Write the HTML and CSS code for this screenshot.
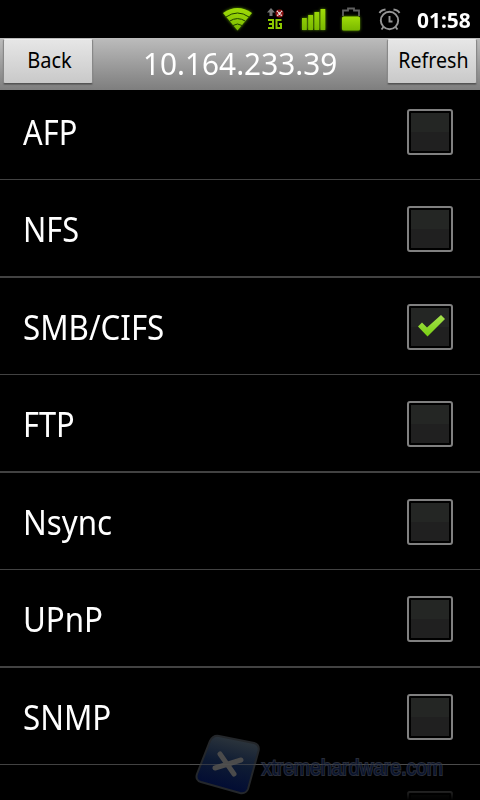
FILE: index.html
```
<!DOCTYPE html>
<html lang="en">
<head>
<meta charset="utf-8">
<title>10.164.233.39</title>
<link rel="stylesheet" href="styles.css">
</head>
<body>
<div class="screen">
  <div class="status">
    <svg class="icons" width="200" height="38" viewBox="210 0 200 38">
      <defs>
        <linearGradient id="g" x1="0" y1="0" x2="0" y2="1"><stop offset="0" stop-color="#a0dc08"/><stop offset="1" stop-color="#79b800"/></linearGradient>
      </defs>
      <g class="glow">
        <path fill="url(#g)" d="M237.500 30.500 223 13Q237.500 3 252 13Z"/>
        <g fill="none" stroke="#1c4000" stroke-width="1"><path d="M226 17Q237.500 9 249 17M229.500 21.200Q237.500 16 245.500 21.200M233 25.500Q237.500 22.500 242 25.500"/></g>
        <path fill="url(#g)" d="M302 18h4.800v12H302zM308.200 15h4.800v15h-4.800zM314.400 12h4.800v18h-4.800zM320.500 9h4.800v21h-4.800z"/>
        <rect x="342" y="16.500" width="18" height="14" rx="1.500" fill="url(#g)"/>
      </g>
      <path fill="none" stroke="#8cc800" stroke-width="2" d="M268 20h5v8h-5M269 24h4M281.500 20h-5v8h4.500v-4h-2"/>
      <path fill="#777" d="M267 12.500l4-4.500 4 4.500h-2.500V16h-3v-3.500z"/>
      <circle cx="279.500" cy="13.500" r="4" fill="#8d1515"/>
      <path stroke="#eee" stroke-width="1.400" stroke-dasharray="1.200 .6" d="M277 11l5 5M282 11l-5 5"/>
      <path fill="none" stroke="#606060" stroke-width="1.800" d="M343 16v-5.500h5V8.500h6v2h5V16"/>
      <g fill="none" stroke="#959595" stroke-width="1.900"><circle cx="389.500" cy="20.500" r="8.700"/><path d="M389.500 16v5.500h3M379.500 13Q381 10 385.500 9.500M399.500 13Q398 10 393.500 9.500M383.500 27l-2 2.500M395.500 27l2 2.500"/></g>
    </svg>
    <div class="clock">01:58</div>
  </div>
  <div class="header">
    <div class="button back"><span>Back</span></div>
    <div class="title"><span>10.164.233.39</span></div>
    <div class="button refresh"><span>Refresh</span></div>
  </div>
  <div class="list">
    <div class="row first"><span class="label afp">AFP</span><i class="box"></i></div>
    <div class="row thick"><span class="label nfs">NFS</span><i class="box"></i></div>
    <div class="row"><span class="label smb">SMB/CIFS</span><i class="box"><svg width="42" height="42" viewBox="409 306 42 42"><defs><linearGradient id="c" x1="0" y1="0" x2="0" y2="1"><stop offset="0" stop-color="#a6e24d"/><stop offset="1" stop-color="#78ce12"/></linearGradient></defs><path fill="url(#c)" d="M418 326.500l4-4 5 5L441 315l4 4-17.500 17.500z"/></svg></i></div>
    <div class="row thick"><span class="label ftp">FTP</span><i class="box"></i></div>
    <div class="row"><span class="label nsync">Nsync</span><i class="box"></i></div>
    <div class="row thick"><span class="label upnp">UPnP</span><i class="box"></i></div>
    <div class="row"><span class="label snmp">SNMP</span><i class="box"></i></div>
    <div class="row"><span class="label"></span><i class="box"></i></div>
  </div>
  <div class="fade"></div>
  <svg class="watermark" width="270" height="72" viewBox="190 728 270 72">
    <defs><linearGradient id="w" gradientUnits="userSpaceOnUse" x1="236" y1="735" x2="222" y2="792"><stop offset="0" stop-color="#30383d"/><stop offset=".5" stop-color="#0e1b33"/><stop offset="1" stop-color="#000a34"/></linearGradient></defs>
    <path fill="url(#w)" stroke="#24272b" stroke-width="2" d="M219 736 254 743Q260 745 258.500 751L248 789Q246 794 240 793L201 782Q195 780 197 774L210 741Q213 735 219 736Z"/>
    <path stroke="#4b4b4b" stroke-width="5" stroke-linecap="round" fill="none" d="M220 754l14 20M215 768 241 760"/>
    <text class="brand" x="262" y="775" textLength="181" lengthAdjust="spacingAndGlyphs">xtremehardware.com</text>
    <path stroke="#555" stroke-opacity=".55" d="M190 764.500h270"/>
  </svg>
</div>
</body>
</html>
```
FILE: styles.css
```
body {
  margin: 0;
  background: #000;
}
.screen {
  position: relative;
  width: 480px;
  height: 800px;
  overflow: hidden;
  background: #000;
  color: #fff;
  font-family: "Noto Sans", "Open Sans", sans-serif;
}
.status {
  display: flex;
  height: 38px;
  padding-left: 210px;
}
.icons { flex: none; }
.glow { filter: drop-shadow(0 0 1.5px #5c9600); }
.clock {
  margin-left: 7px;
  font-size: 22px;
  font-weight: 700;
  line-height: 38px;
  transform: scaleX(.95);
  transform-origin: 0 0;
}
.header {
  display: flex;
  box-sizing: border-box;
  height: 52px;
  padding: 1px 3px 0;
  background: linear-gradient(#bcbcbc, #7e7e7e);
}
.button {
  box-sizing: border-box;
  width: 90px;
  height: 45px;
  border: 1px solid #888;
  border-top-color: #eee;
  border-bottom-color: #555;
  border-radius: 2px;
  background: linear-gradient(#e6e6e6, #c9c9c9);
  box-shadow: 0 1px 1px #666;
  color: #000;
  font-size: 22px;
  line-height: 40px;
  display: flex;
  justify-content: center;
}
.button span,
.title span {
  display: inline-block;
  white-space: nowrap;
}
.back span { transform: translate(1px, -1px) scaleX(.91); }
.refresh span { transform: translate(1px, -1px) scaleX(.89); }
.title {
  flex: 1;
  display: flex;
  justify-content: center;
  font-size: 31px;
  line-height: 49px;
}
.title span { transform: scaleX(.96); }
.row {
  display: flex;
  justify-content: space-between;
  box-sizing: border-box;
  height: 97px;
  padding: 26px 27px 0 23px;
  border-bottom: 1px solid #424242;
}
.thick {
  height: 98px;
  border-bottom-width: 2px;
}
.first {
  height: 90px;
  padding-top: 19px;
}
.label {
  font-size: 34px;
  line-height: 46px;
  height: 46px;
  transform: scaleX(.92);
  transform-origin: 0 0;
}
.afp, .ftp { transform: scaleX(.905); }
.nfs { transform: scaleX(.9); }
.box {
  display: block;
  box-sizing: border-box;
  width: 46px;
  height: 46px;
  padding: 2px;
  border: 2px solid #808080;
  border-radius: 3px;
  background: linear-gradient(#242624 50%, #202020 50%) content-box;
}
.box svg {
  display: block;
  margin: -2px;
}
.fade {
  position: absolute;
  left: 0;
  bottom: 0;
  width: 480px;
  height: 32px;
  background: linear-gradient(transparent, #000);
}
.watermark {
  position: absolute;
  left: 190px;
  top: 728px;
}
.brand {
  font: 22px "Liberation Sans", sans-serif;
  fill: #09142e;
  stroke: #292d38;
  stroke-width: 2px;
  paint-order: stroke;
}
```
